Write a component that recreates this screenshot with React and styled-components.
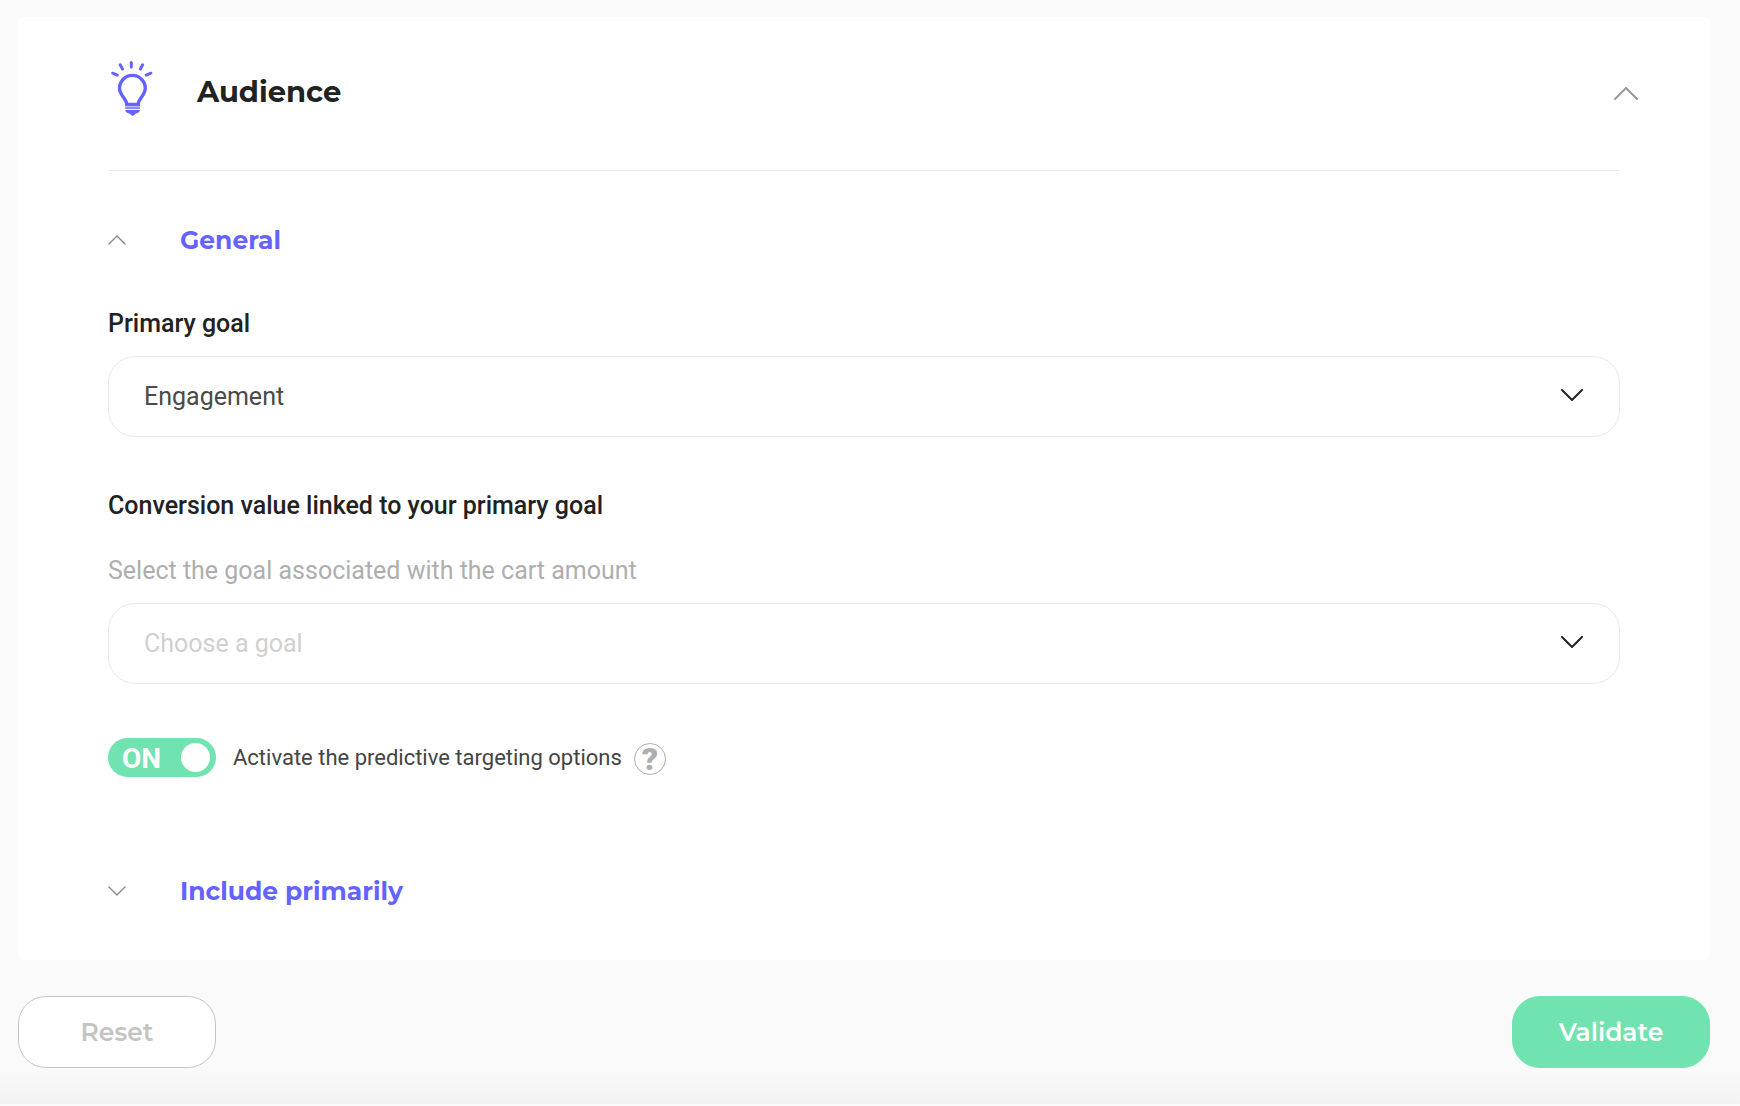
import React, { useState } from 'react'
import styled, { createGlobalStyle } from 'styled-components'

const App = () => {
    const [open, setOpen] = useState(true)
    const [generalOpen, setGeneralOpen] = useState(true)
    const [includeOpen, setIncludeOpen] = useState(false)
    const [goal, setGoal] = useState('engagement')
    const [conversion, setConversion] = useState('')
    const [predictive, setPredictive] = useState(true)

    const handleReset = () => {
        setGoal('engagement')
        setConversion('')
        setPredictive(true)
    }

    return (
        <Page>
            <GlobalStyle />
            <Card>
                <CardHeader>
                    <Bulb />
                    <Title>Audience</Title>
                    <CollapseButton aria-label="Toggle audience" aria-expanded={open} onClick={() => setOpen(!open)}>
                        <Chevron width={24} up={open} color="#999" stroke={2} />
                    </CollapseButton>
                </CardHeader>
                {open && (
                    <>
                        <SectionButton aria-expanded={generalOpen} onClick={() => setGeneralOpen(!generalOpen)}>
                            <Chevron width={18} up={generalOpen} color="#888" stroke={1.3} />
                            General
                        </SectionButton>
                        {generalOpen && (
                            <SectionBody>
                                <Field>
                                    <Label htmlFor="goal">Primary goal</Label>
                                    <SelectBox>
                                        <Select id="goal" value={goal} onChange={e => setGoal(e.target.value)}>
                                            <option value="engagement">Engagement</option>
                                        </Select>
                                        <Chevron width={22} color="#222" stroke={2} />
                                    </SelectBox>
                                </Field>
                                <Field>
                                    <Label htmlFor="conversion">Conversion value linked to your primary goal</Label>
                                    <Hint>Select the goal associated with the cart amount</Hint>
                                    <SelectBox>
                                        <Select
                                            id="conversion"
                                            value={conversion}
                                            $empty={!conversion}
                                            onChange={e => setConversion(e.target.value)}
                                        >
                                            <option value="">Choose a goal</option>
                                            <option value="engagement">Engagement</option>
                                        </Select>
                                        <Chevron width={22} color="#222" stroke={2} />
                                    </SelectBox>
                                </Field>
                                <SwitchRow>
                                    <SwitchLabel>
                                        <SwitchInput
                                            type="checkbox"
                                            checked={predictive}
                                            onChange={e => setPredictive(e.target.checked)}
                                        />
                                        <Track $on={predictive} aria-hidden="true">
                                            {predictive ? 'ON' : 'OFF'}
                                            <Knob />
                                        </Track>
                                        Activate the predictive targeting options
                                    </SwitchLabel>
                                    <HelpButton aria-label="Help">?</HelpButton>
                                </SwitchRow>
                            </SectionBody>
                        )}
                        <SectionButton aria-expanded={includeOpen} onClick={() => setIncludeOpen(!includeOpen)}>
                            <Chevron width={18} up={includeOpen} color="#888" stroke={1.3} />
                            Include primarily
                        </SectionButton>
                    </>
                )}
            </Card>
            <Footer>
                <ResetButton onClick={handleReset}>Reset</ResetButton>
                <ValidateButton>Validate</ValidateButton>
            </Footer>
        </Page>
    )
}

export default App

const Chevron = ({ width, up, color, stroke }) => {
    const mid = width / 2
    const points = up
        ? `1,${mid} ${mid},1 ${width - 1},${mid}`
        : `1,1 ${mid},${mid} ${width - 1},1`
    return (
        <svg width={width} height={mid + 1} viewBox={`0 0 ${width} ${mid + 1}`} fill="none" aria-hidden="true">
            <polyline points={points} stroke={color} strokeWidth={stroke} strokeLinecap="round" />
        </svg>
    )
}

const Bulb = () => (
    <svg width="42" height="56" viewBox="0 0 42 56" fill="none" aria-hidden="true">
        <g stroke="#6563ff" strokeWidth="3" strokeLinecap="round">
            <path d="M20.3 2.5v4.400M9.200 4.800l2.300 4.200M31.600 4.800l-2.200 4.200M1.700 13.200l4.600 2M39.900 13.200l-4.600 2" />
            <path
                strokeWidth="3.4"
                d="M15.600 44c0-5.500-7.100-8.600-7.100-15.700a12.900 12.900 0 0 1 25.800 0c0 7.100-7 10.200-7 15.700"
            />
        </g>
        <path fill="#6563ff" d="M14.200 42.700h14.800v3.300h-14.800zM14.200 50h14.800c0 2-1.800 3-4 3.500-1.200.3-1.900 2.200-3.400 2.200s-2.200-1.900-3.400-2.200c-2.200-.5-4-1.500-4-3.500z" />
        <path fill="#6563ff" opacity=".75" d="M14.200 46.500h14.800v2.600h-14.800z" />
    </svg>
)

const GlobalStyle = createGlobalStyle`
    * {
        box-sizing: border-box;
    }
    body {
        margin: 0;
        background: #fafafa;
        font-family: Roboto, sans-serif;
        color: #222;
    }
    button {
        padding: 0;
        border: none;
        background: none;
        cursor: pointer;
    }
`
const Page = styled.main`
    padding: 17px 30px 0 18px;
    min-height: 100vh;
    background: linear-gradient(#fafafa, #f2f2f2) left bottom 2px / 100% 34px no-repeat #fafafa;
`
const Card = styled.section`
    padding: 0 90px 53px;
    background: #fff;
    border-radius: 6px;
`
const CardHeader = styled.header`
    display: flex;
    align-items: center;
    height: 154px;
    margin-bottom: 53px;
    padding: 0 0 4px 3px;
    border-bottom: 1px solid #e9e9e9;
    > svg {
        margin-bottom: 8px;
    }
`
const Title = styled.h1`
    flex: 1;
    margin: 0 0 0 44px;
    font: 700 29px/36px Montserrat, Inter, sans-serif;
`
const CollapseButton = styled.button`
    display: flex;
    margin: 4px -18px 0 0;
`
const SectionButton = styled.button`
    display: flex;
    align-items: center;
    gap: 54px;
    font: 700 25px/32px Montserrat, Inter, sans-serif;
    color: #6563ff;
`
const SectionBody = styled.div`
    padding: 52px 0 98px;
`
const Field = styled.div`
    margin-bottom: 53px;
`
const Label = styled.label`
    display: block;
    font-size: 25px;
    line-height: 32px;
    font-weight: 500;
`
const Hint = styled.p`
    margin: 33px 0 0;
    font-size: 25px;
    line-height: 32px;
    color: #aeaeae;
`
const SelectBox = styled.div`
    position: relative;
    margin-top: 16px;
    svg {
        position: absolute;
        top: 33px;
        right: 37px;
        pointer-events: none;
    }
`
const Select = styled.select`
    display: block;
    width: 100%;
    height: 81px;
    padding: 0 80px 0 35px;
    appearance: none;
    border: 1px solid #e8e8e8;
    border-radius: 27px;
    background: #fff;
    font: 400 25px/32px Roboto, sans-serif;
    color: ${props => (props.$empty ? '#d0d0d0' : '#4a4a4a')};
`
const SwitchRow = styled.div`
    display: flex;
    align-items: center;
    gap: 12px;
    margin-top: 54px;
`
const SwitchLabel = styled.label`
    display: flex;
    align-items: center;
    gap: 17px;
    font-size: 22px;
    line-height: 26px;
    color: #444;
    cursor: pointer;
`
const SwitchInput = styled.input`
    position: absolute;
    opacity: 0;
`
const Track = styled.span`
    display: flex;
    align-items: center;
    justify-content: space-between;
    width: 108px;
    height: 39px;
    padding: 2px 6px 0 14px;
    border-radius: 20px;
    background: ${props => (props.$on ? '#71e3b0' : '#c4c4c4')};
    font-size: 28px;
    line-height: 37px;
    font-weight: 700;
    color: #fff;
`
const Knob = styled.span`
    width: 29px;
    height: 29px;
    margin-bottom: 2px;
    border-radius: 50%;
    background: #fff;
`
const HelpButton = styled.button`
    width: 32px;
    height: 32px;
    margin-top: 2px;
    font: 900 32px/30px Roboto, sans-serif;
    color: #aeaeae;
    && {
        border: 1px solid #aeaeae;
        border-radius: 50%;
    }
`
const Footer = styled.footer`
    display: flex;
    justify-content: space-between;
    padding: 36px 0;
`
const ResetButton = styled.button`
    width: 198px;
    height: 72px;
    border-radius: 28px;
    font: 600 25px/32px Montserrat, Inter, sans-serif;
    && {
        border: 1px solid #c4c4c4;
        background: #fff;
    }
    color: #c4c4c4;
`
const ValidateButton = styled(ResetButton)`
    && {
        border-color: #71e3b0;
        background: #71e3b0;
    }
    color: #fff;
`
